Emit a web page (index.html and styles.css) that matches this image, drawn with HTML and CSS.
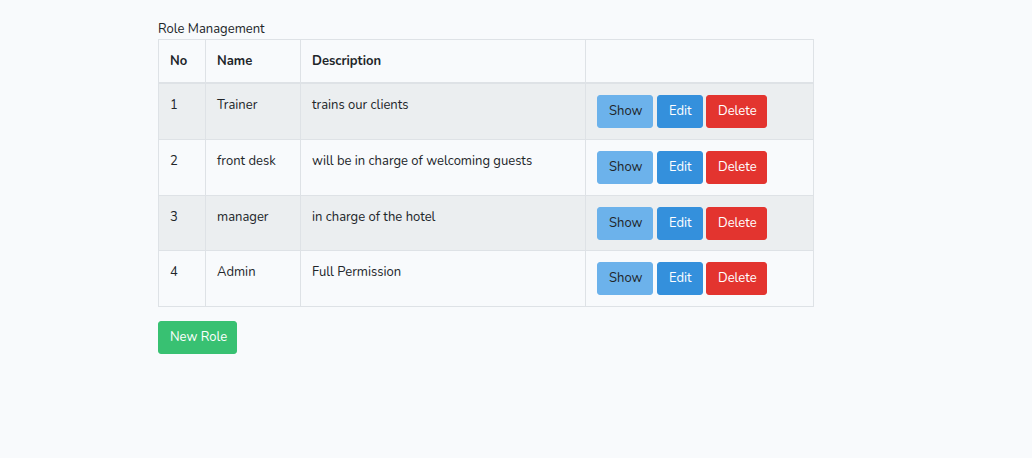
FILE: index.html
```html
<!DOCTYPE html>
<html>
<head>
<meta charset="utf-8">
<link rel="stylesheet" href="styles.css">
</head>
<body>
<main class="page">
  <div class="panel">
    <div class="title">Role Management</div>
    <table class="roles">
      <colgroup>
        <col class="c-no"><col class="c-name"><col class="c-desc"><col class="c-act">
      </colgroup>
      <thead>
        <tr><th>No</th><th>Name</th><th>Description</th><th></th></tr>
      </thead>
      <tbody>
        <tr class="odd"><td>1</td><td>Trainer</td><td>trains our clients</td><td class="actions"><a class="btn info">Show</a><a class="btn primary">Edit</a><a class="btn danger">Delete</a></td></tr>
        <tr><td>2</td><td>front desk</td><td>will be in charge of welcoming guests</td><td class="actions"><a class="btn info">Show</a><a class="btn primary">Edit</a><a class="btn danger">Delete</a></td></tr>
        <tr class="odd"><td>3</td><td>manager</td><td>in charge of the hotel</td><td class="actions"><a class="btn info">Show</a><a class="btn primary">Edit</a><a class="btn danger">Delete</a></td></tr>
        <tr><td>4</td><td>Admin</td><td>Full Permission</td><td class="actions"><a class="btn info">Show</a><a class="btn primary">Edit</a><a class="btn danger">Delete</a></td></tr>
      </tbody>
    </table>
    <a class="btn success newrole">New Role</a>
  </div>
</main>
</body>
</html>
```
FILE: styles.css
```css
html, body {
  margin: 0;
  padding: 0;
  background: #f8fafc;
}
body {
  font-family: "Nunito", "Lato", "Noto Sans", sans-serif;
  font-size: 13px;
  color: #212529;
  line-height: 20px;
}
.page {
  padding: 18px 0 0 158px;
}
.panel {
  width: 656px;
}
.title {
  padding-top: 1px;
  line-height: 20px;
  height: 20px;
}
.roles {
  width: 655px;
  border-collapse: collapse;
  table-layout: fixed;
}
.c-no { width: 47px; }
.c-name { width: 95px; }
.c-desc { width: 285px; }
.c-act { width: 228px; }
.roles th, .roles td {
  border: 1px solid #dee2e6;
  text-align: left;
  vertical-align: top;
  padding: 11px 11px;
}
.roles th {
  font-weight: bold;
  border-bottom: 2px solid #dee2e6;
  padding-top: 11px;
  padding-bottom: 11px;
}
.roles td {
  height: 31.75px;
  padding-top: 11px;
  padding-bottom: 12px;
}
.roles tr.odd td {
  background: #ebeef0;
}
.roles td.actions {
  padding-top: 11px;
  padding-bottom: 10.75px;
  font-size: 0;
}
.btn {
  display: inline-block;
  box-sizing: border-box;
  height: 33px;
  line-height: 31px;
  padding: 0 11px;
  border: 1px solid transparent;
  border-radius: 3px;
  font-size: 13px;
  text-align: center;
  white-space: nowrap;
  vertical-align: top;
  cursor: pointer;
}
.btn + .btn { margin-left: 4px; }
.btn.danger { margin-left: 3px; }
.info { background: #6cb2eb; border-color: #6cb2eb; color: #212529; width: 56px; }
.primary { background: #3490dc; border-color: #3490dc; color: #fff; width: 46px; }
.danger { background: #e3342f; border-color: #e3342f; color: #fff; width: 61px; }
.success { background: #38c172; border-color: #38c172; color: #fff; }
.newrole {
  margin-top: 14px;
  width: 79px;
}
```
